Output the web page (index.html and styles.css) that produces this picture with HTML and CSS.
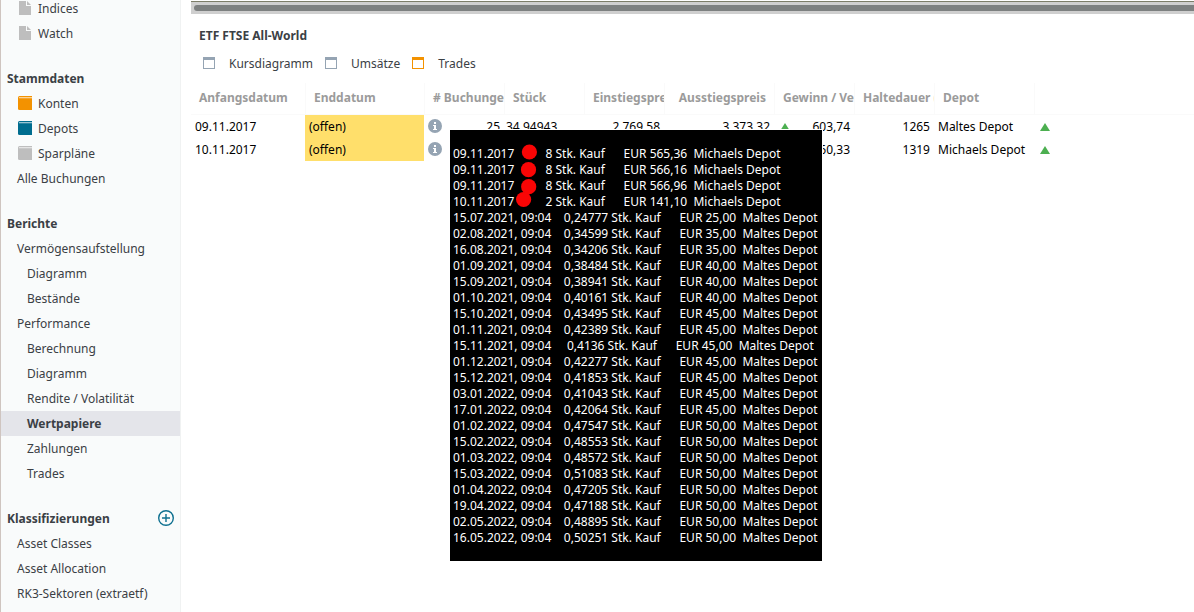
FILE: index.html
```html
<!DOCTYPE html>
<html lang="de">
<head>
    <meta charset="UTF-8">
    <meta name="viewport" content="width=device-width, initial-scale=1.0">
    <title>ETF FTSE All-World</title>
    <link rel="stylesheet" href="styles.css">
</head>
<body>

    <!-- icons -->
    <svg class="defs">
        <symbol id="file" viewBox="0 0 14 14">
            <path d="M1 0h7v5h5v9H1z" fill="#bebebe"/>
            <path d="M9 0l4 4H9z" fill="#bebebe"/>
        </symbol>
        <symbol id="book" viewBox="0 0 14 14">
            <path d="M1.500 0H14v14H1.500Q0 14 0 12.500v-11Q0 0 1.500 0z" fill="currentColor"/>
            <path d="M1 1h13v1.300H1z" fill="#fff" opacity=".6"/>
        </symbol>
        <symbol id="info" viewBox="0 0 14 14">
            <circle cx="7" cy="7" r="7" fill="#95a4b3"/>
            <path d="M6 3h2v2H6zM5 6h3v4h1v1H5v-1h1V7H5z" fill="#fff"/>
        </symbol>
        <symbol id="up" viewBox="0 0 10 8">
            <path d="M5 0l5 8H0z" fill="#4caf50"/>
        </symbol>
        <symbol id="plus" viewBox="0 0 16 16">
            <circle cx="8" cy="8" r="7.300" fill="none" stroke="#0e7090" stroke-width="1.400"/>
            <path d="M4 8h8M8 4v8" stroke="#0e7090" stroke-width="1.400"/>
        </symbol>
    </svg>

    <div class="app">
        <nav class="sidebar">
            <ul>
                <li><a href="#" class="with-icon"><svg><use href="#file"/></svg>Indices</a></li>
                <li><a href="#" class="with-icon"><svg><use href="#file"/></svg>Watch</a></li>
            </ul>

            <h2>Stammdaten</h2>
            <ul>
                <li><a href="#" class="with-icon orange"><svg><use href="#book"/></svg>Konten</a></li>
                <li><a href="#" class="with-icon blue"><svg><use href="#book"/></svg>Depots</a></li>
                <li><a href="#" class="with-icon grey"><svg><use href="#book"/></svg>Sparpläne</a></li>
                <li><a href="#">Alle Buchungen</a></li>
            </ul>

            <h2>Berichte</h2>
            <ul>
                <li><a href="#">Vermögensaufstellung</a></li>
                <li><a href="#" class="sub">Diagramm</a></li>
                <li><a href="#" class="sub">Bestände</a></li>
                <li><a href="#">Performance</a></li>
                <li><a href="#" class="sub">Berechnung</a></li>
                <li><a href="#" class="sub">Diagramm</a></li>
                <li><a href="#" class="sub">Rendite / Volatilität</a></li>
                <li><a href="#" class="sub active">Wertpapiere</a></li>
                <li><a href="#" class="sub">Zahlungen</a></li>
                <li><a href="#" class="sub">Trades</a></li>
            </ul>

            <h2>Klassifizierungen
                <button class="add" aria-label="Hinzufügen"><svg><use href="#plus"/></svg></button>
            </h2>
            <ul>
                <li><a href="#">Asset Classes</a></li>
                <li><a href="#">Asset Allocation</a></li>
                <li><a href="#">RK3-Sektoren (extraetf)</a></li>
            </ul>
        </nav>

        <main class="content">
            <div class="scrollbar"><div class="thumb"></div></div>

            <h1>ETF FTSE All-World</h1>

            <div class="tabs">
                <button class="tab">Kursdiagramm</button>
                <button class="tab">Umsätze</button>
                <button class="tab selected">Trades</button>
            </div>

            <div class="trades">
                <table>
                    <colgroup>
                        <col class="c-start">
                        <col class="c-end">
                        <col class="c-num">
                        <col class="c-num">
                        <col class="c-num">
                        <col class="c-exit">
                        <col class="c-num">
                        <col class="c-num">
                        <col class="c-depot">
                        <col>
                    </colgroup>
                    <thead>
                        <tr>
                            <th>Anfangsdatum</th>
                            <th>Enddatum</th>
                            <th># Buchungen</th>
                            <th>Stück</th>
                            <th>Einstiegspreis</th>
                            <th class="exit">Ausstiegspreis</th>
                            <th>Gewinn / Verlust</th>
                            <th>Haltedauer (Tage)</th>
                            <th>Depot</th>
                            <th></th>
                        </tr>
                    </thead>
                    <tbody>
                        <tr>
                            <td>09.11.2017</td>
                            <td class="open">(offen)</td>
                            <td><div class="cell"><svg class="info"><use href="#info"/></svg>25</div></td>
                            <td class="shares">34,94943</td>
                            <td class="right">2.769,58</td>
                            <td class="right">3.373,32</td>
                            <td><div class="cell gain"><svg class="up"><use href="#up"/></svg>603,74</div></td>
                            <td class="right">1265</td>
                            <td>Maltes Depot</td>
                            <td class="trend"><svg class="up"><use href="#up"/></svg></td>
                        </tr>
                        <tr>
                            <td>10.11.2017</td>
                            <td class="open">(offen)</td>
                            <td><div class="cell"><svg class="info"><use href="#info"/></svg>4</div></td>
                            <td class="shares">26</td>
                            <td class="right">1.839,58</td>
                            <td class="right">2.299,91</td>
                            <td><div class="cell gain"><svg class="up"><use href="#up"/></svg>460,33</div></td>
                            <td class="right">1319</td>
                            <td>Michaels Depot</td>
                            <td class="trend"><svg class="up"><use href="#up"/></svg></td>
                        </tr>
                    </tbody>
                </table>

                <!-- tooltip with the single bookings -->
                <div class="tooltip" role="tooltip">
<pre>09.11.2017          8 Stk. Kauf      EUR 565,36  Michaels Depot
09.11.2017          8 Stk. Kauf      EUR 566,16  Michaels Depot
09.11.2017          8 Stk. Kauf      EUR 566,96  Michaels Depot
10.11.2017          2 Stk. Kauf      EUR 141,10  Michaels Depot
15.07.2021, 09:04    0,24777 Stk. Kauf      EUR 25,00  Maltes Depot
02.08.2021, 09:04    0,34599 Stk. Kauf      EUR 35,00  Maltes Depot
16.08.2021, 09:04    0,34206 Stk. Kauf      EUR 35,00  Maltes Depot
01.09.2021, 09:04    0,38484 Stk. Kauf      EUR 40,00  Maltes Depot
15.09.2021, 09:04    0,38941 Stk. Kauf      EUR 40,00  Maltes Depot
01.10.2021, 09:04    0,40161 Stk. Kauf      EUR 40,00  Maltes Depot
15.10.2021, 09:04    0,43495 Stk. Kauf      EUR 45,00  Maltes Depot
01.11.2021, 09:04    0,42389 Stk. Kauf      EUR 45,00  Maltes Depot
15.11.2021, 09:04     0,4136 Stk. Kauf      EUR 45,00  Maltes Depot
01.12.2021, 09:04    0,42277 Stk. Kauf      EUR 45,00  Maltes Depot
15.12.2021, 09:04    0,41853 Stk. Kauf      EUR 45,00  Maltes Depot
03.01.2022, 09:04    0,41043 Stk. Kauf      EUR 45,00  Maltes Depot
17.01.2022, 09:04    0,42064 Stk. Kauf      EUR 45,00  Maltes Depot
01.02.2022, 09:04    0,47547 Stk. Kauf      EUR 50,00  Maltes Depot
15.02.2022, 09:04    0,48553 Stk. Kauf      EUR 50,00  Maltes Depot
01.03.2022, 09:04    0,48572 Stk. Kauf      EUR 50,00  Maltes Depot
15.03.2022, 09:04    0,51083 Stk. Kauf      EUR 50,00  Maltes Depot
01.04.2022, 09:04    0,47205 Stk. Kauf      EUR 50,00  Maltes Depot
19.04.2022, 09:04    0,47188 Stk. Kauf      EUR 50,00  Maltes Depot
02.05.2022, 09:04    0,48895 Stk. Kauf      EUR 50,00  Maltes Depot
16.05.2022, 09:04    0,50251 Stk. Kauf      EUR 50,00  Maltes Depot</pre>
                    <svg class="marks" viewBox="0 0 30 70">
                        <circle cx="13.400" cy="8" r="7.600"/>
                        <circle cx="12.500" cy="25.700" r="7.600"/>
                        <circle cx="12.700" cy="42.700" r="7.600"/>
                        <circle cx="7.600" cy="55.500" r="7.600"/>
                    </svg>
                </div>
            </div>
        </main>
    </div>

</body>
</html>
```
FILE: styles.css
```css
*, *::before {
    box-sizing: border-box;
}

body {
    margin: 0;
    font-family: "Noto Sans", sans-serif;
    font-size: 12px;
    color: #3b4045;
    background-color: #fff;
}

.defs {
    display: none;
}

h1, h2, ul {
    margin: 0;
    padding: 0;
    font-size: 12px;
}

.app {
    display: flex;
    height: 100vh;
    overflow: hidden;
}

/* sidebar */
.sidebar {
    flex: none;
    width: 181px;
    margin-top: -4px;
    border-left: 1px solid #cfc5c0;
    border-right: 1px solid #f0f2f2;
    background-color: #f9fbfb;
}

.sidebar ul {
    list-style: none;
    margin-bottom: 20px;
}

.sidebar a {
    display: flex;
    align-items: center;
    height: 25px;
    padding-left: 16px;
    color: #3b4045;
    text-decoration: none;
}

.sidebar a.sub {
    padding-left: 26px;
}

.sidebar a.active {
    background-color: #e4e5ea;
    font-weight: bold;
}

.with-icon svg {
    width: 14px;
    height: 14px;
    margin: 0 6px 1px 1px;
}

.orange svg {
    color: #f39200;
}

.blue svg {
    color: #006d8f;
}

.grey svg {
    color: #bebebe;
}

.sidebar h2 {
    display: flex;
    align-items: center;
    justify-content: space-between;
    height: 25px;
    padding: 0 6px;
}

.add {
    width: 16px;
    height: 16px;
    margin-bottom: 1px;
    padding: 0;
    border: none;
    background: none;
    cursor: pointer;
}

.add svg {
    display: block;
    width: 16px;
    height: 16px;
}

/* content */
.content {
    flex: 1;
    min-width: 0;
    padding-left: 10px;
}

.scrollbar {
    height: 13px;
    margin-top: 1px;
    padding: 3px 0 0 3px;
    border-top: 1px solid #7c7d68;
    background-color: #cfcfcf;
}

.thumb {
    height: 6px;
    border-radius: 3px 0 0 3px;
    background-color: #7d8080;
}

h1 {
    margin-top: 13px;
    padding-left: 8px;
    line-height: 18px;
}

.tabs {
    display: flex;
    gap: 12px;
    margin-top: 9px;
    padding-left: 12px;
}

.tab {
    display: flex;
    align-items: center;
    gap: 14px;
    height: 18px;
    padding: 0;
    border: none;
    background: none;
    font: inherit;
    color: #3b4045;
    cursor: pointer;
}

.tab::before {
    content: "";
    width: 12px;
    height: 12px;
    border: 1px solid #95a4b3;
    border-top-width: 3px;
}

.tab.selected::before {
    border-color: #f39200;
}

/* trades table */
.trades {
    position: relative;
    margin-top: 11px;
}

table {
    width: 100%;
    table-layout: fixed;
    border-spacing: 0;
    color: #000;
}

.c-start {
    width: 114px;
}

.c-end {
    width: 119px;
}

.c-num {
    width: 80px;
}

.c-exit {
    width: 110px;
}

.c-depot {
    width: 100px;
}

th {
    height: 32px;
    padding: 0 0 2px 8px;
    overflow: hidden;
    white-space: nowrap;
    text-align: left;
    color: #9b9b9b;
    border-left: 1px solid #fafafa;
    border-bottom: 1px solid #fafafa;
}

th:first-child {
    border-left: none;
}

th.exit {
    padding-right: 8px;
    text-align: right;
}

td {
    height: 23px;
    padding: 0 4px;
    white-space: nowrap;
}

.open {
    background-color: #ffdf6b;
}

.right {
    text-align: right;
}

.shares {
    padding-left: 2px;
}

.cell {
    display: flex;
    align-items: center;
    justify-content: space-between;
}

.gain {
    padding-left: 2px;
}

.info {
    width: 14px;
    height: 14px;
    margin-bottom: 1px;
}

.up {
    width: 10px;
    height: 8px;
}

.trend {
    padding-left: 6px;
}

.tooltip {
    position: absolute;
    top: 47px;
    left: 259px;
    width: 372px;
    padding: 16px 3px 15px;
    background-color: #000;
    box-shadow: 0 0 0 1px #fff;
    color: #fff;
}

.tooltip pre {
    margin: 0;
    font-family: "Noto Sans", sans-serif;
    font-size: 12px;
    line-height: 16px;
}

.marks {
    position: absolute;
    top: 14px;
    left: 66px;
    width: 30px;
    height: 70px;
    fill: #fa0505;
}
```
